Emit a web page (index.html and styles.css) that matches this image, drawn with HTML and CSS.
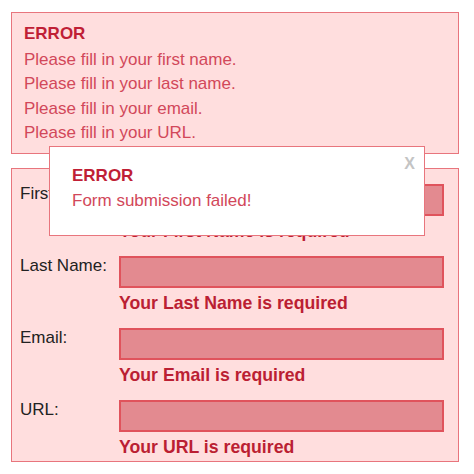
FILE: index.html
```html
<!DOCTYPE html>
<html lang="en">
<head>
  <meta charset="UTF-8">
  <title>Form Errors</title>
  <link rel="stylesheet" href="styles.css">
</head>
<body>

<!-- Error summary -->
<div class="error-summary">
  <h3>ERROR</h3>
  <p>Please fill in your first name.</p>
  <p>Please fill in your last name.</p>
  <p>Please fill in your email.</p>
  <p>Please fill in your URL.</p>
</div>

<div class="form-wrap">
  <form class="form-box">
    <div class="form-row">
      <label>First Name:</label>
      <div class="field">
        <input type="text" name="first">
        <span class="field-error">Your First Name is required</span>
      </div>
    </div>

    <div class="form-row">
      <label>Last Name:</label>
      <div class="field">
        <input type="text" name="last">
        <span class="field-error">Your Last Name is required</span>
      </div>
    </div>

    <div class="form-row">
      <label>Email:</label>
      <div class="field">
        <input type="text" name="email">
        <span class="field-error">Your Email is required</span>
      </div>
    </div>

    <div class="form-row">
      <label>URL:</label>
      <div class="field">
        <input type="text" name="url">
        <span class="field-error">Your URL is required</span>
      </div>
    </div>
  </form>

  <!-- Popup -->
  <div class="popup">
    <span class="popup-close">X</span>
    <h3>ERROR</h3>
    <p>Form submission failed!</p>
  </div>
</div>

</body>
</html>
```

FILE: styles.css
```css
body {
  font-family: "Liberation Sans", Arial, sans-serif;
  font-size: 17px;
  margin: 0;
  padding: 12px 15px 0 11px;
  background-color: #fff;
}
h3, p {
  margin: 0;
}
.error-summary {
  background-color: #ffdede;
  border: 1px solid #e8757d;
  padding: 9px 12px 7px 12px;
  line-height: 24.5px;
  color: #d2485a;
}
.error-summary h3 {
  color: #c01f36;
  font-size: 17px;
  margin-bottom: 1px;
}
.form-wrap {
  position: relative;
  margin-top: 14px;
}
.form-box {
  background-color: #ffdede;
  border: 1px solid #e8757d;
  padding: 15px 14px 2px 8px;
  display: flex;
  flex-direction: column;
  gap: 13px;
}
.form-row {
  display: flex;
  align-items: flex-start;
}
.form-row label {
  width: 99px;
  line-height: 20px;
  color: #222;
}
.field {
  flex: 1;
  display: flex;
  flex-direction: column;
}
.field input {
  height: 32px;
  box-sizing: border-box;
  background-color: #e38a90;
  border: 2px solid #e0535c;
  border-radius: 0;
  margin: 0;
}
.field-error {
  margin-top: 3px;
  line-height: 24px;
  font-size: 17.7px;
  font-weight: bold;
  color: #bb1f33;
}
.popup {
  position: absolute;
  top: -22px;
  left: 38px;
  width: 376px;
  height: 90px;
  box-sizing: border-box;
  background-color: #fff;
  border: 1px solid #e8757d;
  padding: 16px 22px;
  line-height: 25px;
  color: #d2485a;
}
.popup h3 {
  color: #c01f36;
  font-size: 17px;
}
.popup-close {
  position: absolute;
  top: 4px;
  right: 9px;
  font-size: 16px;
  font-weight: bold;
  color: #c4c4c4;
}
```
